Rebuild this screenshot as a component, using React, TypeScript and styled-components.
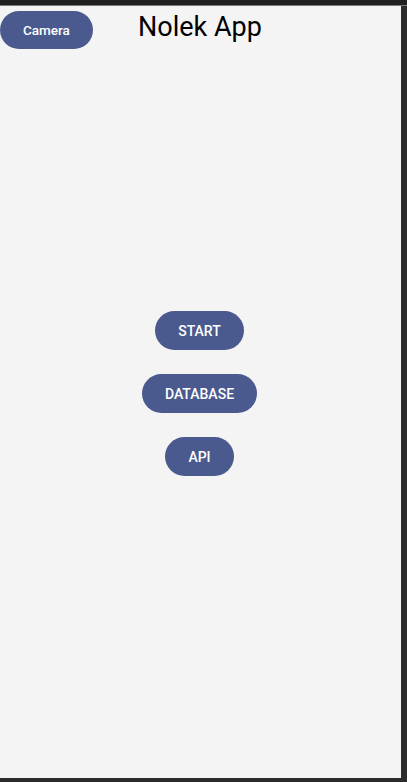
import React from 'react';
import styled, { createGlobalStyle } from 'styled-components';

const GlobalStyle = createGlobalStyle`
  html, body {
    margin: 0;
    padding: 0;
    background: #2b2b2b;
  }
  * {
    box-sizing: border-box;
  }
`;

const Frame = styled.div`
  width: 407px;
  height: 782px;
  display: flex;
  flex-direction: column;
  background: #2b2b2b;
`;

const TopBar = styled.div`
  height: 6px;
  background: #1f1f1f;
  border-bottom: 1px solid #7a7a7a;
`;

const Screen = styled.div`
  width: 401px;
  height: 772px;
  background: #f4f4f4;
  display: grid;
  grid-template: 1fr / 1fr;
  font-family: Roboto, 'Liberation Sans', sans-serif;
`;

const Header = styled.div`
  grid-area: 1 / 1;
  align-self: start;
  display: grid;
  grid-template-columns: 1fr auto 1fr;
  align-items: start;
  padding-top: 5px;
`;

const Title = styled.h1`
  margin: 0;
  font-size: 27px;
  font-weight: 400;
  color: #000;
  line-height: 32px;
  margin-left: -1px;
`;

const Menu = styled.div`
  grid-area: 1 / 1;
  align-self: center;
  justify-self: center;
  display: flex;
  flex-direction: column;
  align-items: center;
  gap: 24px;
  padding: 3px 2px 0 0;
`;

const PillButton = styled.button<{ $small?: boolean }>`
  justify-self: start;
  border: none;
  background: #4a5a8f;
  color: #fff;
  font-family: Roboto, 'Liberation Sans', sans-serif;
  font-weight: 500;
  font-size: ${(p) => (p.$small ? '13.5px' : '14px')};
  height: ${(p) => (p.$small ? '38px' : '39px')};
  padding: 0 23px;
  border-radius: 20px;
  cursor: pointer;
`;

const App: React.FC = () => {
  return (
    <Frame>
      <GlobalStyle />
      <TopBar />
      <Screen>
        <Header>
          <PillButton $small>Camera</PillButton>
          <Title>Nolek App</Title>
        </Header>
        <Menu>
          <PillButton>START</PillButton>
          <PillButton>DATABASE</PillButton>
          <PillButton>API</PillButton>
        </Menu>
      </Screen>
    </Frame>
  );
};

export default App;
